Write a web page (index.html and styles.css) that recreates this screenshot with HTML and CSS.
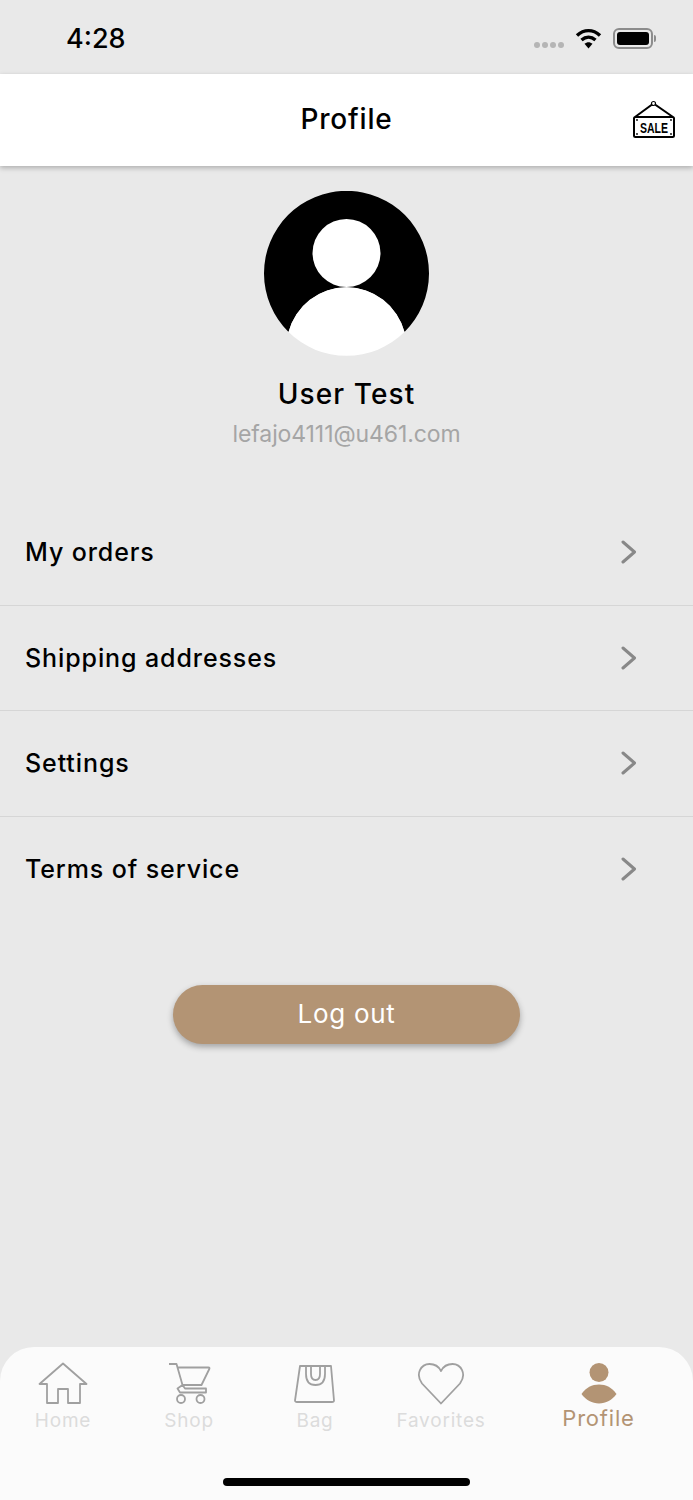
FILE: index.html
```html
<!DOCTYPE html>
<html lang="en">
<head>
    <meta charset="UTF-8">
    <meta name="viewport" content="width=device-width, initial-scale=1.0">
    <title>Profile</title>
    <link rel="stylesheet" href="styles.css">
</head>
<body>
    <div class="status-bar">
        <span class="time">4:28</span>
        <div class="status-icons">
            <div class="signal"><i></i><i></i><i></i><i></i></div>
            <svg class="wifi" width="27" height="21" viewBox="0 0 27 21">
                <path d="M2 7.5C9 1 18 1 25 7.5" fill="none" stroke="#000" stroke-width="3.4"/>
                <path d="M6.5 12C10.800 8.300 16.200 8.300 20.500 12" fill="none" stroke="#000" stroke-width="3.4"/>
                <path d="M9.500 15.800C12 13.600 15 13.600 17.500 15.800L13.500 20.500Z" fill="#000"/>
            </svg>
            <div class="battery"><div class="battery-fill"></div></div>
            <div class="battery-nub"></div>
        </div>
    </div>

    <header class="top-bar">
        <span></span>
        <h1>Profile</h1>
        <svg class="sale-icon" width="44" height="40" viewBox="0 0 44 40">
            <path d="M3 17L21.500 3.500L41 17" fill="none" stroke="#000" stroke-width="2"/>
            <circle cx="21.500" cy="3.500" r="2" fill="#fff" stroke="#000" stroke-width="1.200"/>
            <rect x="2" y="17" width="40" height="20" rx="1.500" fill="#fff" stroke="#000" stroke-width="2"/>
            <circle cx="5" cy="20" r="0.900"/><circle cx="39" cy="20" r="0.900"/>
            <circle cx="5" cy="34" r="0.900"/><circle cx="39" cy="34" r="0.900"/>
            <text class="sale-text" transform="translate(22 32.500) scale(0.75 1)" text-anchor="middle">SALE</text>
        </svg>
    </header>

    <main class="content">
        <section class="user">
            <svg class="avatar" width="165" height="165" viewBox="0 0 165 165">
                <path d="M24.500 141A82.500 82.500 0 1 1 140.500 141A60 60 0 0 0 24.500 141Z" fill="#000"/>
                <path d="M24.500 141A60 60 0 0 1 140.500 141A82.500 82.500 0 0 1 24.500 141Z" fill="#fff"/>
                <circle cx="82.500" cy="62" r="34" fill="#fff"/>
            </svg>
            <h2 class="user-name">User Test</h2>
            <p class="user-email">lefajo4111@u461.com</p>
        </section>

        <nav class="menu">
            <a class="menu-row">My orders
                <svg class="chevron" width="16" height="24" viewBox="0 0 16 24"><path d="M2 2L13.500 12L2 22"/></svg>
            </a>
            <a class="menu-row">Shipping addresses
                <svg class="chevron" width="16" height="24" viewBox="0 0 16 24"><path d="M2 2L13.500 12L2 22"/></svg>
            </a>
            <a class="menu-row">Settings
                <svg class="chevron" width="16" height="24" viewBox="0 0 16 24"><path d="M2 2L13.500 12L2 22"/></svg>
            </a>
            <a class="menu-row">Terms of service
                <svg class="chevron" width="16" height="24" viewBox="0 0 16 24"><path d="M2 2L13.500 12L2 22"/></svg>
            </a>
        </nav>

        <button class="logout" type="button">Log out</button>
    </main>

    <footer class="tab-bar">
        <div class="tabs">
            <div class="tab">
                <svg class="tab-icon" width="50" height="44" viewBox="0 0 50 44">
                    <path d="M25 1.500L1.500 22H9V41H20V27H30V41H42V22H48.500Z"/>
                </svg>
                <span>Home</span>
            </div>
            <div class="tab">
                <svg class="tab-icon" width="44" height="44" viewBox="0 0 44 44">
                    <path d="M2 2H9.500L10.500 5.500H41.500Q43 5.500 42.300 7L34.500 23H15.500L10.500 26.500L13 30.500H39V26.500H18L15.500 23M10.500 5.500L15.500 23"/>
                    <circle cx="14" cy="37" r="4"/>
                    <circle cx="33.500" cy="37" r="4"/>
                </svg>
                <span>Shop</span>
            </div>
            <div class="tab">
                <svg class="tab-icon" width="44" height="44" viewBox="0 0 44 44">
                    <path d="M7 4H38L41 38.500Q41 40 39 40H4Q2 40 2 38.500Z"/>
                    <path d="M13 4V12Q13 23 22.500 23Q32 23 32 12V4M18 4V12Q18 18 22.500 18Q27 18 27 12V4"/>
                </svg>
                <span>Bag</span>
            </div>
            <div class="tab">
                <svg class="tab-icon" width="50" height="44" viewBox="0 0 50 44">
                    <path d="M25 41.500L6 21.500C-1 12 5 2 13.500 2C18.500 2 23 5 25 9C27 5 31.500 2 36.500 2C45 2 51 12 44 21.500Z"/>
                </svg>
                <span>Favorites</span>
            </div>
            <div class="tab tab-active">
                <svg class="tab-icon" width="44" height="44" viewBox="0 0 44 44">
                    <circle cx="22" cy="10.500" r="9.500"/>
                    <path d="M4.500 32C9 25.500 15 22.500 22 22.500C29 22.500 35 25.500 39.500 32C35 38 29 41.500 22 41.500C15 41.500 9 38 4.500 32Z"/>
                </svg>
                <span>Profile</span>
            </div>
        </div>
        <div class="home-indicator"></div>
    </footer>
</body>
</html>
```
FILE: styles.css
```css
* {
    box-sizing: border-box;
}
body {
    font-family: Inter, "Liberation Sans", sans-serif;
    margin: 0;
    min-height: 100vh;
    display: flex;
    flex-direction: column;
    background-color: #e9e9e9;
    color: #000;
}
.status-bar {
    height: 74px;
    padding: 2px 37px 0 66px;
    display: flex;
    align-items: center;
    justify-content: space-between;
}
.time {
    font-size: 27px;
    font-weight: 500;
}
.status-icons {
    display: flex;
    align-items: center;
}
.signal {
    display: flex;
    gap: 2px;
    margin: 14px 11px 0 0;
}
.signal i {
    width: 6px;
    height: 6px;
    border-radius: 50%;
    background-color: #b5b5b5;
}
.wifi {
    margin-right: 11px;
}
.battery {
    width: 40px;
    height: 21px;
    padding: 2px;
    border: 2px solid #8c8c8c;
    border-radius: 6px;
}
.battery-fill {
    height: 100%;
    background-color: #000;
    border-radius: 3px;
}
.battery-nub {
    width: 2px;
    height: 7px;
    margin-left: 1px;
    background-color: #8c8c8c;
    border-radius: 0 2px 2px 0;
}
.top-bar {
    height: 92px;
    padding: 0 17px;
    display: grid;
    grid-template-columns: 1fr auto 1fr;
    align-items: center;
    background-color: #fff;
    box-shadow: 0 2px 5px rgba(0, 0, 0, 0.25);
}
.top-bar h1 {
    margin: 0 0 2px;
    font-size: 28px;
    font-weight: 500;
    letter-spacing: 0.8px;
}
.sale-icon {
    justify-self: end;
}
.sale-text {
    font-family: "Liberation Sans", sans-serif;
    font-size: 14px;
    font-weight: bold;
}
.content {
    flex: 1;
    display: flex;
    flex-direction: column;
}
.user {
    padding-top: 25px;
    display: flex;
    flex-direction: column;
    align-items: center;
}
.avatar {
    display: block;
}
.user-name {
    margin: 20px 0 0;
    font-size: 28px;
    line-height: 36px;
    font-weight: 500;
    letter-spacing: 1.1px;
}
.user-email {
    margin: 8px 0 0;
    font-size: 23px;
    line-height: 28px;
    letter-spacing: -0.1px;
    color: #a5a5a5;
}
.menu {
    margin-top: 52px;
}
.menu-row {
    height: 105.500px;
    padding: 0 56px 0 25px;
    display: flex;
    align-items: center;
    justify-content: space-between;
    font-size: 25px;
    font-weight: 500;
    letter-spacing: 0.9px;
    border-bottom: 1px solid #d6d6d6;
}
.menu-row:last-child {
    border-bottom: none;
}
.chevron {
    fill: none;
    stroke: #888;
    stroke-width: 3;
    stroke-linecap: round;
    stroke-linejoin: round;
}
.logout {
    align-self: center;
    width: 347px;
    height: 59px;
    margin-top: 63px;
    padding: 0 0 2px;
    border: none;
    border-radius: 30px;
    font-family: inherit;
    font-size: 26px;
    letter-spacing: 0.7px;
    color: #fff;
    background-color: #b39474;
    box-shadow: 0 3px 6px rgba(0, 0, 0, 0.3);
}
.tab-bar {
    height: 153px;
    padding-top: 15px;
    display: flex;
    flex-direction: column;
    background-color: #fbfbfb;
    border-radius: 34px 34px 0 0;
}
.tabs {
    display: flex;
}
.tab {
    flex: 2;
    display: flex;
    flex-direction: column;
    align-items: center;
    font-size: 19px;
    line-height: 24px;
    letter-spacing: 0.8px;
    color: #dcdcdc;
}
.tab span {
    margin-top: 3px;
}
.tab-active {
    flex: 3;
    font-size: 22px;
    line-height: 26px;
    color: #b39474;
}
.tab-active span {
    margin-top: -1px;
}
.tab-icon {
    display: block;
    fill: none;
    stroke: #a0a0a0;
    stroke-width: 1.800;
    stroke-linejoin: round;
}
.tab-active .tab-icon {
    fill: #b39474;
    stroke: none;
}
.home-indicator {
    width: 247px;
    height: 8px;
    margin: auto auto 14px;
    background-color: #000;
    border-radius: 4px;
}
```
